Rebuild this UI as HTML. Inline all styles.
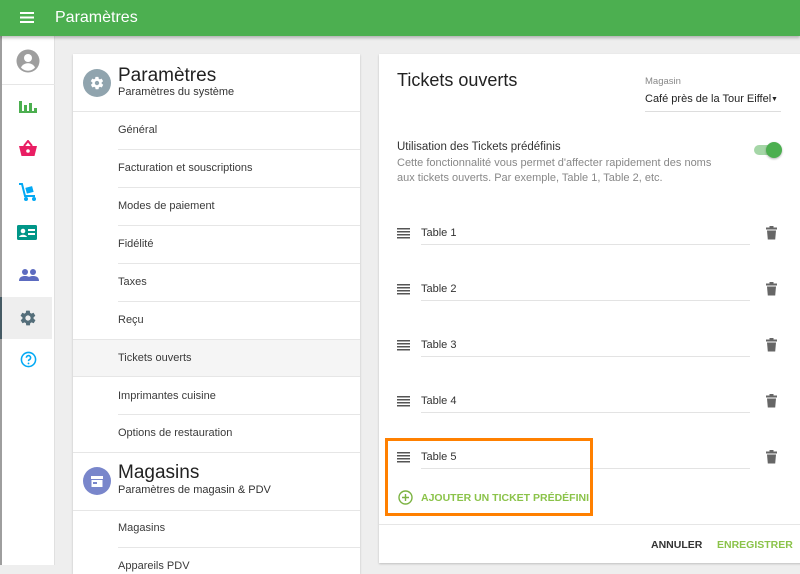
<!DOCTYPE html>
<html><head><meta charset="utf-8"><style>
*{margin:0;padding:0;box-sizing:border-box}
body{width:800px;height:565px;overflow:hidden;background:#eeeeee;font-family:"Liberation Sans",sans-serif;position:relative;color:#333}
.top{position:absolute;left:0;top:0;width:800px;height:36px;background:#4caf50;box-shadow:0 2px 3px rgba(0,0,0,.25);z-index:2}
.top .t{position:absolute;left:55px;top:9px;color:#fff;font-size:16px}
.side{position:absolute;left:0;top:36px;width:55px;height:529px;background:#fff;border-left:2px solid #9e9e9e;border-right:1px solid #e0e0e0}
.ic{position:absolute;left:16px}
.card{position:absolute;background:#fff;box-shadow:0 1px 2px rgba(0,0,0,.2)}
.hr{position:absolute;height:1px;background:#e6e6e6}
.item{position:absolute;left:45px;font-size:11px;color:#3a3a3a}
</style></head><body>
<div class="top">
<svg style="position:absolute;left:20px;top:12px" width="14" height="11"><rect y="0" width="14" height="2" fill="#fff"/><rect y="4.5" width="14" height="2" fill="#fff"/><rect y="9" width="14" height="2" fill="#fff"/></svg>
<div class="t">Paramètres</div></div>
<div class="side">
<svg class="ic" style="top:13px;left:14px" width="24" height="24" viewBox="0 0 24 24"><circle cx="12" cy="12" r="11.5" fill="#9e9e9e"/><circle cx="12" cy="9" r="4" fill="#fff"/><path d="M5 18.5c1.5-3 4.5-4.2 7-4.2s5.5 1.2 7 4.2c-1.8 2-4.3 3.2-7 3.2s-5.2-1.2-7-3.2z" fill="#fff"/></svg>
<div style="position:absolute;left:0;top:48px;width:53px;height:1px;background:#e6e6e6"></div>
<svg class="ic" style="top:62px" width="20" height="16"><rect x="1" y="3" width="3" height="12" fill="#4caf50"/><rect x="6" y="7" width="3" height="8" fill="#4caf50"/><rect x="11" y="5" width="3" height="10" fill="#4caf50"/><rect x="16" y="10" width="3" height="5" fill="#4caf50"/><rect x="1" y="13" width="18" height="2" fill="#4caf50"/></svg>
<svg class="ic" style="top:104px" width="20" height="18"><path d="M1 6h18l-2.5 10h-13z" fill="#e91e63"/><path d="M6 6l4-5 4 5" stroke="#e91e63" stroke-width="2" fill="none"/><circle cx="10" cy="11" r="1.8" fill="#fff"/></svg>
<svg class="ic" style="top:146px" width="20" height="20"><path d="M1 2h3l3 12h10" stroke="#03a9f4" stroke-width="2" fill="none"/><rect x="8" y="5" width="7" height="6" fill="#03a9f4" transform="rotate(-15 11 8)"/><circle cx="8" cy="17" r="2" fill="#03a9f4"/><circle cx="16" cy="17" r="2" fill="#03a9f4"/></svg>
<svg class="ic" style="top:189px;left:15px" width="20" height="16"><rect x="0" y="0" width="20" height="15" rx="1.5" fill="#009688"/><circle cx="6" cy="6" r="2.3" fill="#fff"/><path d="M2 12c1-3 7-3 8 0z" fill="#fff"/><rect x="11" y="4" width="7" height="2" fill="#fff"/><rect x="11" y="8" width="7" height="2" fill="#fff"/></svg>
<svg class="ic" style="top:232px;left:17px" width="20" height="14"><circle cx="6" cy="4" r="3" fill="#5c6bc0"/><circle cx="14" cy="4" r="3" fill="#5c6bc0"/><path d="M0 13c0-4 3-5 6-5s6 1 6 5z" fill="#5c6bc0"/><path d="M8 13c0-4 3-5 6-5s6 1 6 5z" fill="#5c6bc0"/></svg>
<div style="position:absolute;left:0;top:261px;width:52px;height:42px;background:#eeeeee;border-left:2px solid #455a64;margin-left:-2px"></div>
<svg class="ic" style="top:273px;left:17px" width="18" height="18" viewBox="0 0 24 24"><path fill="#546e7a" d="M19.4 13c.1-.3.1-.7.1-1s0-.7-.1-1l2.1-1.6c.2-.2.2-.4.1-.6l-2-3.5c-.1-.2-.4-.3-.6-.2l-2.5 1c-.5-.4-1.1-.7-1.7-1l-.4-2.6c0-.2-.2-.4-.5-.4h-4c-.2 0-.4.2-.5.4l-.4 2.6c-.6.2-1.1.6-1.7 1l-2.5-1c-.2-.1-.5 0-.6.2l-2 3.5c-.1.2-.1.5.1.6L4.6 11c0 .3-.1.7-.1 1s0 .7.1 1l-2.1 1.6c-.2.2-.2.4-.1.6l2 3.5c.1.2.4.3.6.2l2.5-1c.5.4 1.1.7 1.7 1l.4 2.6c0 .2.2.4.5.4h4c.2 0 .4-.2.5-.4l.4-2.6c.6-.3 1.2-.6 1.7-1l2.5 1c.2.1.5 0 .6-.2l2-3.5c.1-.2.1-.5-.1-.6L19.4 13zM12 15.5c-1.9 0-3.5-1.6-3.5-3.5s1.6-3.5 3.5-3.5 3.5 1.6 3.5 3.5-1.6 3.5-3.5 3.5z"/></svg>
<svg class="ic" style="top:315px;left:18px" width="17" height="17" viewBox="0 0 24 24"><circle cx="12" cy="12" r="10" stroke="#03a9f4" stroke-width="2.2" fill="none"/><path d="M9 9.5a3 3 0 1 1 4 2.8c-.8.4-1 1-1 2" stroke="#03a9f4" stroke-width="2.2" fill="none"/><circle cx="12" cy="17.5" r="1.3" fill="#03a9f4"/></svg>
</div>

<div class="card" style="left:73px;top:54px;width:287px;height:520px">
<svg style="position:absolute;left:10px;top:15px" width="28" height="28" viewBox="0 0 28 28"><circle cx="14" cy="14" r="14" fill="#90a4ae"/><g transform="translate(6.5 6.5) scale(.625)"><path fill="#fff" d="M19.4 13c.1-.3.1-.7.1-1s0-.7-.1-1l2.1-1.6c.2-.2.2-.4.1-.6l-2-3.5c-.1-.2-.4-.3-.6-.2l-2.5 1c-.5-.4-1.1-.7-1.7-1l-.4-2.6c0-.2-.2-.4-.5-.4h-4c-.2 0-.4.2-.5.4l-.4 2.6c-.6.2-1.1.6-1.7 1l-2.5-1c-.2-.1-.5 0-.6.2l-2 3.5c-.1.2-.1.5.1.6L4.6 11c0 .3-.1.7-.1 1s0 .7.1 1l-2.1 1.6c-.2.2-.2.4-.1.6l2 3.5c.1.2.4.3.6.2l2.5-1c.5.4 1.1.7 1.7 1l.4 2.6c0 .2.2.4.5.4h4c.2 0 .4-.2.5-.4l.4-2.6c.6-.3 1.2-.6 1.7-1l2.5 1c.2.1.5 0 .6-.2l2-3.5c.1-.2.1-.5-.1-.6L19.4 13zM12 15.5c-1.9 0-3.5-1.6-3.5-3.5s1.6-3.5 3.5-3.5 3.5 1.6 3.5 3.5-1.6 3.5-3.5 3.5z"/></g></svg>
<div style="position:absolute;left:45px;top:11px;font-size:19px;color:#222">Paramètres</div>
<div style="position:absolute;left:45px;top:32px;font-size:11px;color:#333">Paramètres du système</div>
<div class="hr" style="left:0;top:57px;width:287px"></div>
<div class="item" style="top:70px">Général</div>
<div class="hr" style="left:45px;top:95px;width:242px"></div>
<div class="item" style="top:108px">Facturation et souscriptions</div>
<div class="hr" style="left:45px;top:133px;width:242px"></div>
<div class="item" style="top:146px">Modes de paiement</div>
<div class="hr" style="left:45px;top:171px;width:242px"></div>
<div class="item" style="top:184px">Fidélité</div>
<div class="hr" style="left:45px;top:209px;width:242px"></div>
<div class="item" style="top:222px">Taxes</div>
<div class="hr" style="left:45px;top:247px;width:242px"></div>
<div class="item" style="top:260px">Reçu</div>
<div style="position:absolute;left:0;top:285px;width:287px;height:38px;background:#f5f5f5;border-top:1px solid #e6e6e6;border-bottom:1px solid #e6e6e6"></div>
<div class="item" style="top:298px">Tickets ouverts</div>
<div class="item" style="top:336px">Imprimantes cuisine</div>
<div class="hr" style="left:45px;top:360px;width:242px"></div>
<div class="item" style="top:373px">Options de restauration</div>
<div class="hr" style="left:0;top:398px;width:287px"></div>
<svg style="position:absolute;left:10px;top:413px" width="28" height="28"><circle cx="14" cy="14" r="14" fill="#7986cb"/><rect x="8" y="9" width="12" height="3" fill="#fff"/><rect x="8.5" y="13" width="11" height="7" fill="#fff"/><rect x="10" y="15" width="4" height="2" fill="#7986cb"/></svg>
<div style="position:absolute;left:45px;top:408px;font-size:19px;color:#222">Magasins</div>
<div style="position:absolute;left:45px;top:430px;font-size:11px;color:#333">Paramètres de magasin &amp; PDV</div>
<div class="hr" style="left:0;top:456px;width:287px"></div>
<div class="item" style="top:468px">Magasins</div>
<div class="hr" style="left:45px;top:493px;width:242px"></div>
<div class="item" style="top:506px">Appareils PDV</div>
</div>

<div class="card" style="left:379px;top:54px;width:430px;height:509px">
<div style="position:absolute;left:18px;top:16px;font-size:18px;color:#222">Tickets ouverts</div>
<div style="position:absolute;left:266px;top:22px;font-size:9.5px;color:#888">Magasin</div>
<div style="position:absolute;left:266px;top:39px;font-size:11px;color:#222">Café près de la Tour Eiffel</div>
<div style="position:absolute;left:392px;top:42px;font-size:7px;color:#222">▼</div>
<div class="hr" style="left:266px;top:57px;width:136px;background:#ddd"></div>
<div style="position:absolute;left:18px;top:87px;font-size:11.5px;color:#333">Utilisation des Tickets prédéfinis</div>
<div style="position:absolute;left:18px;top:102px;font-size:11px;color:#888;line-height:15px">Cette fonctionnalité vous permet d'affecter rapidement des noms<br>aux tickets ouverts. Par exemple, Table 1, Table 2, etc.</div>
<div style="position:absolute;left:375px;top:91px;width:24px;height:10px;border-radius:5px;background:#a5d6a7"></div>
<div style="position:absolute;left:387px;top:88px;width:16px;height:16px;border-radius:8px;background:#4caf50;box-shadow:0 1px 2px rgba(0,0,0,.3)"></div>

<div id="rows"></div>
<div style="position:absolute;left:6px;top:384px;width:208px;height:78px;border:3px solid #ff8000"></div>
<svg style="position:absolute;left:19px;top:436px" width="15" height="15"><circle cx="7.5" cy="7.5" r="6.5" stroke="#7cb342" stroke-width="1.4" fill="none"/><path d="M7.5 4v7M4 7.5h7" stroke="#7cb342" stroke-width="1.4"/></svg>
<div style="position:absolute;left:42px;top:438px;font-size:10.5px;font-weight:bold;color:#8bc34a">AJOUTER UN TICKET PRÉDÉFINI</div>
<div class="hr" style="left:0;top:470px;width:430px"></div>
<div style="position:absolute;left:272px;top:485px;font-size:10.5px;font-weight:bold;color:#333">ANNULER</div>
<div style="position:absolute;left:338px;top:485px;font-size:10.5px;font-weight:bold;color:#8bc34a">ENREGISTRER</div>
</div>
<script>
var h='';[1,2,3,4,5].forEach(function(n,i){var y=170+i*56;
h+='<svg style="position:absolute;left:18px;top:'+(y+4)+'px" width="13" height="11"><rect y="0" width="13" height="1.5" fill="#555"/><rect y="3" width="13" height="1.5" fill="#555"/><rect y="6" width="13" height="1.5" fill="#555"/><rect y="9" width="13" height="1.5" fill="#555"/></svg>';
h+='<div style="position:absolute;left:42px;top:'+(y+3)+'px;font-size:11px;color:#333">Table '+n+'</div>';
h+='<div class="hr" style="left:42px;top:'+(y+20)+'px;width:329px;background:#e3e3e3"></div>';
h+='<svg style="position:absolute;left:387px;top:'+(y+2)+'px" width="11" height="14"><rect x="0" y="1.5" width="11" height="2" fill="#666"/><rect x="3.5" y="0" width="4" height="2" fill="#666"/><path d="M1 4.5h9l-.8 9h-7.4z" fill="#666"/></svg>';});
document.getElementById('rows').outerHTML=h;
</script>
</body></html>
